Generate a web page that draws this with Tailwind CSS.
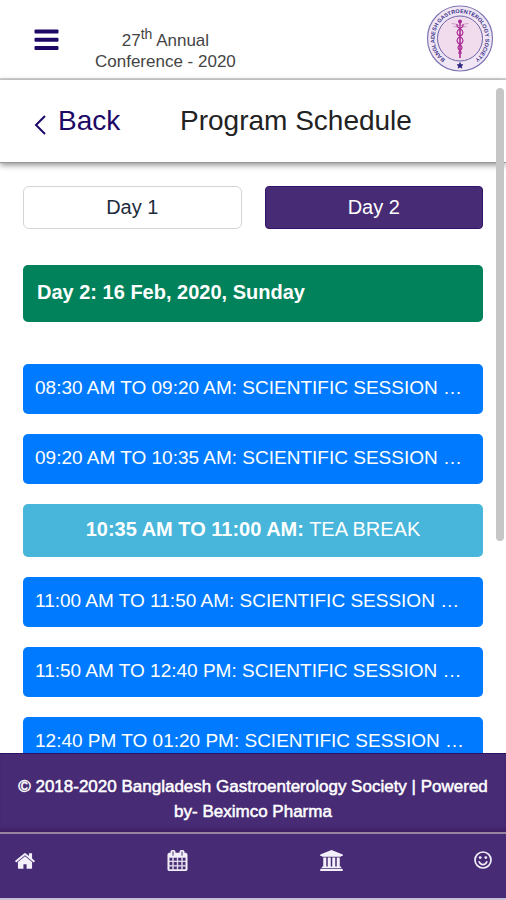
<!DOCTYPE html>
<html lang="en">
<head>
    <meta charset="UTF-8">
    <meta name="viewport" content="width=device-width, initial-scale=1.0">
    <title>Program Schedule - 27th Annual Conference</title>
    <script src="https://cdn.jsdelivr.net/npm/@tailwindcss/browser@4"></script>
</head>
<body class="relative flex flex-col h-screen overflow-hidden bg-white font-['Liberation_Sans',Arial,sans-serif]">

    <header class="flex shrink-0 items-start h-20 pl-[34px] pr-3 border-b-2 border-[#d4d4d4]">
        <button type="button" aria-label="Menu" class="mt-7 text-[#1d0866]">
            <svg class="w-[25px] h-6" viewBox="0 0 25 24" fill="currentColor">
                <rect x="0.500" y="1.500" width="24" height="4" rx="1"/>
                <rect x="0.500" y="9.700" width="24" height="4" rx="1"/>
                <rect x="0.500" y="18" width="24" height="4" rx="1"/>
            </svg>
        </button>
        <p class="mt-[30px] ml-9 text-[17px] leading-[21px] text-center text-[#444]">27<sup class="text-[14px] leading-none">th</sup> Annual<br>Conference - 2020</p>
        <svg class="w-[68px] h-[69px] mt-1 ml-auto" viewBox="0 0 68 68" role="img" aria-label="Bangladesh Gastroenterology Society">
            <defs>
                <path id="ring" d="M24.500 57.700A25.500 25.500 0 1 1 43.500 57.700"/>
            </defs>
            <circle cx="34" cy="34" r="32.500" fill="#f1e6f4" stroke="#7f76b4" stroke-width="1.200"/>
            <circle cx="34" cy="34" r="22.500" fill="#f1dcee" stroke="#6c62a6" stroke-width="1"/>
            <text fill="#39318e" font-size="5.500" font-weight="bold"><textPath href="#ring" startOffset="50%" text-anchor="middle">BANGLADESH GASTROENTEROLOGY SOCIETY</textPath></text>
            <path d="M34 58l.9 2 2.100.2-1.600 1.400.5 2.100-1.900-1.100-1.900 1.100.5-2.100-1.600-1.400 2.100-.2z" fill="#28207e" stroke="#28207e" stroke-width=".6"/>
            <g fill="none" stroke="#a82891" stroke-linecap="round">
                <path d="M34 17v36" stroke-width="1.600"/>
                <path d="M26 19q5 0 8 3q3-3 8-3M28 22q4 0 6 2q2-2 6-2" stroke-width=".8" stroke="#c286ba"/>
                <path d="M31 20c-1 4 6 4 6 8s-6 4-6 8 5 4 5 7-4 3-3 6M37 20c1 4-6 4-6 8s6 4 6 8-5 4-5 7 4 3 3 6" stroke-width="1.200"/>
            </g>
            <circle cx="34" cy="17" r="2" fill="#a82891"/>
        </svg>
    </header>

    <div class="relative z-10 flex shrink-0 items-center h-[83px] pl-[34px] bg-white border-b border-[#999] shadow-[0_2px_6px_rgba(0,0,0,0.45)]">
        <a href="#" class="flex items-center w-[146px] text-[28px] text-[#1d0866]">
            <svg class="w-3 h-5 mt-2 mr-3" viewBox="0 0 12 20" fill="none" stroke="currentColor" stroke-width="2"><path d="M11 1L2 10l9 9"/></svg>
            Back
        </a>
        <h1 class="text-[28px] text-[#222]">Program Schedule</h1>
    </div>

    <main class="flex-1 min-h-0 overflow-hidden px-[23px] pt-[23px] text-[20px] text-white">
        <div class="grid grid-cols-2 gap-[23px] mb-9">
            <button type="button" class="h-[43px] pb-0.5 rounded-md border border-[#d5d5d5] text-[#1c2c3c]">Day 1</button>
            <button type="button" class="h-[43px] pb-0.5 rounded-sm border border-[#35146b] bg-[#472b75]">Day 2</button>
        </div>

        <h2 class="h-[57px] mb-[42px] px-3.5 rounded-[5px] bg-[#02825a] font-bold leading-[55px]">Day 2: 16 Feb, 2020, Sunday</h2>

        <div class="flex flex-col gap-5">
            <button type="button" class="shrink-0 h-[50px] pl-3 pr-1 pb-0.5 rounded-[5px] bg-[#007bff] text-[19px] text-left truncate">08:30 AM TO 09:20 AM: SCIENTIFIC SESSION …</button>
            <button type="button" class="shrink-0 h-[50px] pl-3 pr-1 pb-0.5 rounded-[5px] bg-[#007bff] text-[19px] text-left truncate">09:20 AM TO 10:35 AM: SCIENTIFIC SESSION …</button>
            <p class="shrink-0 h-[53px] rounded-[5px] bg-[#48b6da] text-center leading-[51px]"><b>10:35 AM TO 11:00 AM:</b> TEA BREAK</p>
            <button type="button" class="shrink-0 h-[50px] pl-3 pr-1 pb-0.5 rounded-[5px] bg-[#007bff] text-[19px] text-left truncate">11:00 AM TO 11:50 AM: SCIENTIFIC SESSION …</button>
            <button type="button" class="shrink-0 h-[50px] pl-3 pr-1 pb-0.5 rounded-[5px] bg-[#007bff] text-[19px] text-left truncate">11:50 AM TO 12:40 PM: SCIENTIFIC SESSION …</button>
            <button type="button" class="shrink-0 h-[50px] pl-3 pr-1 pb-0.5 rounded-[5px] bg-[#007bff] text-[19px] text-left truncate">12:40 PM TO 01:20 PM: SCIENTIFIC SESSION …</button>
        </div>
    </main>

    <!-- scroll indicator -->
    <div class="absolute z-20 top-[88px] right-0.5 w-2 h-[453px] rounded-full bg-[#c6c6c6]"></div>

    <footer class="shrink-0 bg-[#472b75] border-t border-[#2c1066] text-white">
        <p class="px-4 pt-5 pb-2 text-[17px] leading-[25px] text-center [-webkit-text-stroke:0.5px_white] shadow-[inset_0_-5px_5px_-3px_rgba(50,10,70,0.5)]">© 2018-2020 Bangladesh Gastroenterology Society | Powered by- Beximco Pharma</p>
        <nav class="flex items-start justify-between h-[68px] px-3.5 pt-4 border-t-2 border-b-2 border-t-[#99839f] border-b-[#c9c0d8] text-[#f4f0fa]">
            <a href="#" aria-label="Home">
                <svg class="w-[22px] h-[22px]" viewBox="0 0 1792 1792" fill="currentColor"><path d="M1472 992v480q0 26-19 45t-45 19h-384v-384h-256v384h-384q-26 0-45-19t-19-45v-480q0-1 .5-3t.5-3l575-474 575 474q1 2 1 6zm223-69l-62 74q-8 9-21 11h-3q-13 0-21-7l-692-577-692 577q-12 8-24 7-13-2-21-11l-62-74q-8-10-7-23.500t11-21.500l719-599q32-26 76-26t76 26l244 204v-195q0-14 9-23t23-9h192q14 0 23 9t9 23v408l219 182q10 8 11 21.500t-7 23.500z"/></svg>
            </a>
            <a href="#" aria-label="Schedule">
                <svg class="w-[21px] h-[21px]" viewBox="0 0 1792 1792" fill="currentColor" stroke="currentColor" stroke-width="40"><path d="M192 1664h288v-288h-288v288zm352 0h320v-288h-320v288zm-352-352h288v-320h-288v320zm352 0h320v-320h-320v320zm-352-384h288v-288h-288v288zm736 736h320v-288h-320v288zm-384-736h320v-288h-320v288zm768 736h288v-288h-288v288zm-384-352h320v-320h-320v320zm-352-864v-288q0-13-9.500-22.500t-22.500-9.500h-64q-13 0-22.500 9.500t-9.500 22.500v288q0 13 9.500 22.500t22.500 9.500h64q13 0 22.500-9.500t9.500-22.500zm736 864h288v-320h-288v320zm-384-384h320v-288h-320v288zm384 0h288v-288h-288v288zm32-480v-288q0-13-9.500-22.500t-22.500-9.500h-64q-13 0-22.500 9.500t-9.500 22.500v288q0 13 9.500 22.500t22.500 9.500h64q13 0 22.500-9.500t9.500-22.500zm384-64v1280q0 52-38 90t-90 38h-1408q-52 0-90-38t-38-90v-1280q0-52 38-90t90-38h128v-96q0-66 47-113t113-47h64q66 0 113 47t47 113v96h384v-96q0-66 47-113t113-47h64q66 0 113 47t47 113v96h128q52 0 90 38t38 90z"/></svg>
            </a>
            <a href="#" aria-label="Society">
                <svg class="w-[23px] h-[21px]" viewBox="0 0 1920 1792" fill="currentColor"><path d="M960 0l960 384v128h-128q0 26-20.500 45t-48.500 19h-1526q-28 0-48.500-19t-20.500-45h-128v-128zm-704 640h256v768h128v-768h256v768h128v-768h256v768h128v-768h256v768h59q28 0 48.500 19t20.500 45v64h-1664v-64q0-26 20.500-45t48.500-19h59v-768zm1595 960q28 0 48.500 19t20.500 45v128h-1920v-128q0-26 20.500-45t48.500-19h1782z"/></svg>
            </a>
            <a href="#" aria-label="Feedback">
                <svg class="w-[18px] h-5" viewBox="0 0 18 20" fill="none" stroke="currentColor" stroke-width="1.700" stroke-linecap="round">
                    <circle cx="9" cy="10" r="8"/>
                    <path d="M5.200 11.800q1.100 2.900 3.800 2.900t3.800-2.900"/>
                    <circle cx="6.200" cy="7.600" r="1.400" fill="currentColor" stroke="none"/>
                    <circle cx="11.800" cy="7.600" r="1.400" fill="currentColor" stroke="none"/>
                </svg>
            </a>
        </nav>
    </footer>

</body>
</html>
